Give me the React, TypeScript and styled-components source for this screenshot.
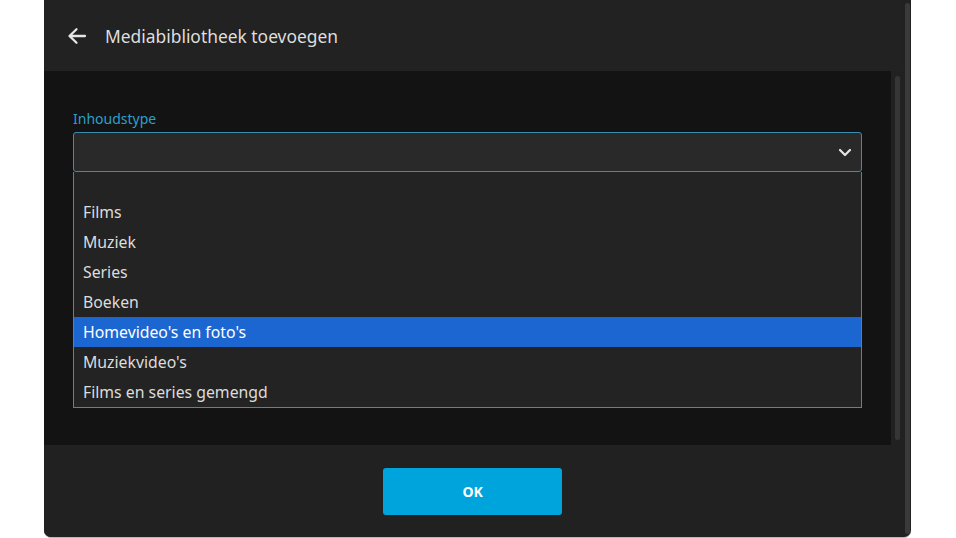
import React from "react";
import styled, { createGlobalStyle } from "styled-components";

const Global = createGlobalStyle`
  html, body { margin: 0; padding: 0; background: #ffffff; }
  body { font-family: "Noto Sans", "Open Sans", sans-serif; }
  * { box-sizing: border-box; }
`;

const Page = styled.div`
  width: 956px;
  height: 538px;
  display: flex;
  padding-left: 44px;
  overflow: hidden;
`;

const Dialog = styled.div`
  width: 867px;
  height: 537px;
  display: flex;
  background: #212121;
  border-bottom-left-radius: 7px;
  border-bottom-right-radius: 7px;
  box-shadow: 0 1px 0 #b8b8b8;
  overflow: hidden;
`;

const Main = styled.div`
  flex: 1;
  display: flex;
  flex-direction: column;
`;

const Header = styled.header`
  height: 71px;
  display: flex;
  align-items: center;
  gap: 17px;
  padding-left: 22px;
  background: #222222;
`;

const BackButton = styled.button`
  width: 22px;
  height: 22px;
  padding: 0;
  border: none;
  background: transparent;
  display: flex;
  align-items: center;
  justify-content: center;
  color: #e6e6e6;
`;

const Title = styled.h1`
  margin: 0;
  font-size: 17.4px;
  font-weight: 400;
  color: #dedede;
  letter-spacing: 0;
`;

const BodyRow = styled.div`
  height: 374px;
  display: flex;
`;

const Content = styled.div`
  flex: 1;
  background: #131313;
  padding: 38px 29px 0 29px;
`;

const Track = styled.div<{ $top: number; $bottom: number; $width: number }>`
  width: ${(p) => p.$width}px;
  display: flex;
  justify-content: center;
  padding-top: ${(p) => p.$top}px;
  padding-bottom: ${(p) => p.$bottom}px;
`;

const Thumb = styled.div<{ $color: string }>`
  width: 5px;
  height: 100%;
  border-radius: 3px;
  background: ${(p) => p.$color};
`;

const Label = styled.label`
  display: block;
  font-size: 14px;
  color: #2d9fcc;
  line-height: 19px;
  margin-bottom: 4px;
`;

const SelectWrap = styled.div`
  position: relative;
`;

const SelectBox = styled.div`
  height: 40px;
  border: 1px solid #3b8db0;
  border-radius: 3px;
  background: #292929;
  display: flex;
  align-items: center;
  justify-content: flex-end;
  padding-right: 9px;
  color: #e6e6e6;
`;

const List = styled.ul`
  position: absolute;
  left: 0;
  right: 0;
  top: 40px;
  margin: 0;
  padding: 0;
  list-style: none;
  background: #232323;
  border: 1px solid #7a7a7a;
  border-top: none;
`;

const Option = styled.li<{ $selected?: boolean; $blank?: boolean }>`
  height: ${(p) => (p.$blank ? 25 : 30)}px;
  display: flex;
  align-items: center;
  padding-left: 9px;
  font-size: 15.8px;
  color: ${(p) => (p.$selected ? "#ffffff" : "#dcdcdc")};
  background: ${(p) => (p.$selected ? "#1c66d1" : "transparent")};
`;

const Footer = styled.footer`
  flex: 1;
  display: flex;
  justify-content: center;
  padding-top: 23px;
  padding-right: 2px;
  background: #212121;
`;

const OkButton = styled.button`
  width: 179px;
  height: 47px;
  border: none;
  border-radius: 3px;
  background: #00a4dc;
  color: #ffffff;
  font-family: "Noto Sans", sans-serif;
  font-weight: 700;
  font-size: 14px;
  letter-spacing: -0.3px;
`;

const options = [
  "Films",
  "Muziek",
  "Series",
  "Boeken",
  "Homevideo's en foto's",
  "Muziekvideo's",
  "Films en series gemengd",
];

export default function App() {
  return (
    <>
      <Global />
      <Page>
        <Dialog>
          <Main>
            <Header>
              <BackButton aria-label="Terug">
                <svg width="20" height="18" viewBox="0 0 20 18" fill="none">
                  <path d="M18 9H3M9.5 2.2L2.5 9l7 6.8" stroke="currentColor" strokeWidth="2.3" strokeLinecap="round" strokeLinejoin="round" />
                </svg>
              </BackButton>
              <Title>Mediabibliotheek toevoegen</Title>
            </Header>
            <BodyRow>
              <Content>
                <Label>Inhoudstype</Label>
                <SelectWrap>
                  <SelectBox>
                    <svg width="14" height="9" viewBox="0 0 14 9" fill="none">
                      <path d="M2 2l5 5 5-5" stroke="currentColor" strokeWidth="2.2" strokeLinecap="round" strokeLinejoin="round" />
                    </svg>
                  </SelectBox>
                  <List>
                    <Option $blank />
                    {options.map((o, i) => (
                      <Option key={o} $selected={i === 4}>
                        {o}
                      </Option>
                    ))}
                  </List>
                </SelectWrap>
              </Content>
              <Track $top={5} $bottom={5} $width={12}>
                <Thumb $color="#363636" />
              </Track>
            </BodyRow>
            <Footer>
              <OkButton>OK</OkButton>
            </Footer>
          </Main>
          <Track $top={3} $bottom={3} $width={8}>
            <Thumb $color="#3a3a3a" />
          </Track>
        </Dialog>
      </Page>
    </>
  );
}
